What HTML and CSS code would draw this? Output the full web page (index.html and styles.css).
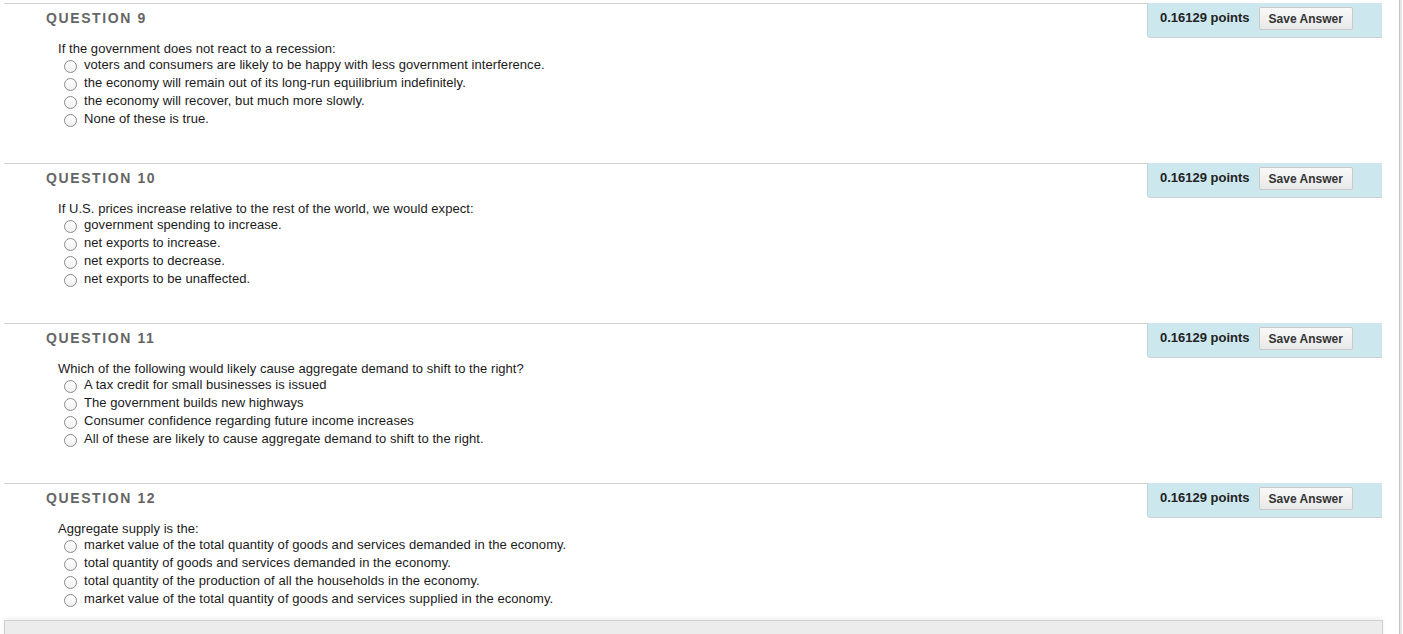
FILE: index.html
```html
<!DOCTYPE html>
<html lang="en">
<head>
<meta charset="utf-8">
<title>Questions</title>
<link rel="stylesheet" href="styles.css">
</head>
<body>
<div class="page">
  <main class="content">
    <section class="question">
      <div class="q-head">
        <h3 class="q-title">QUESTION 9</h3>
        <div class="q-points"><span class="pts">0.16129 points</span><button class="save">Save Answer</button></div>
      </div>
      <p class="q-text">If the government does not react to a recession:</p>
      <ul class="options">
        <li><span class="radio"></span>voters and consumers are likely to be happy with less government interference.</li>
        <li><span class="radio"></span>the economy will remain out of its long-run equilibrium indefinitely.</li>
        <li><span class="radio"></span>the economy will recover, but much more slowly.</li>
        <li><span class="radio"></span>None of these is true.</li>
      </ul>
    </section>
    <section class="question">
      <div class="q-head">
        <h3 class="q-title">QUESTION 10</h3>
        <div class="q-points"><span class="pts">0.16129 points</span><button class="save">Save Answer</button></div>
      </div>
      <p class="q-text">If U.S. prices increase relative to the rest of the world, we would expect:</p>
      <ul class="options">
        <li><span class="radio"></span>government spending to increase.</li>
        <li><span class="radio"></span>net exports to increase.</li>
        <li><span class="radio"></span>net exports to decrease.</li>
        <li><span class="radio"></span>net exports to be unaffected.</li>
      </ul>
    </section>
    <section class="question">
      <div class="q-head">
        <h3 class="q-title">QUESTION 11</h3>
        <div class="q-points"><span class="pts">0.16129 points</span><button class="save">Save Answer</button></div>
      </div>
      <p class="q-text">Which of the following would likely cause aggregate demand to shift to the right?</p>
      <ul class="options">
        <li><span class="radio"></span>A tax credit for small businesses is issued</li>
        <li><span class="radio"></span>The government builds new highways</li>
        <li><span class="radio"></span>Consumer confidence regarding future income increases</li>
        <li><span class="radio"></span>All of these are likely to cause aggregate demand to shift to the right.</li>
      </ul>
    </section>
    <section class="question last">
      <div class="q-head">
        <h3 class="q-title">QUESTION 12</h3>
        <div class="q-points"><span class="pts">0.16129 points</span><button class="save">Save Answer</button></div>
      </div>
      <p class="q-text">Aggregate supply is the:</p>
      <ul class="options">
        <li><span class="radio"></span>market value of the total quantity of goods and services demanded in the economy.</li>
        <li><span class="radio"></span>total quantity of goods and services demanded in the economy.</li>
        <li><span class="radio"></span>total quantity of the production of all the households in the economy.</li>
        <li><span class="radio"></span>market value of the total quantity of goods and services supplied in the economy.</li>
      </ul>
    </section>
    <div class="footer-box"></div>
  </main>
  <div class="edge"></div>
</div>
</body>
</html>
```
FILE: styles.css
```css
html, body {
  margin: 0;
  padding: 0;
  background: #fff;
}
body {
  font-family: "Liberation Sans", Arial, Helvetica, sans-serif;
  color: #1a1a1a;
  overflow: hidden;
}
.page {
  display: flex;
  min-height: 100vh;
}
.content {
  width: 1379px;
  padding: 3px 0 0 4px;
}
.question {
  width: 1378px;
  border-top: 1px solid #cfcfcf;
  padding-bottom: 35px;
}
.question.last {
  padding-bottom: 12px;
}
.q-head {
  display: flex;
  justify-content: space-between;
  align-items: flex-start;
}
.q-title {
  margin: 6px 0 0 42px;
  font-size: 14px;
  line-height: 17px;
  font-weight: bold;
  letter-spacing: 1.6px;
  color: #666;
}
.q-points {
  width: 222px;
  height: 31px;
  padding: 3px 0 0 12px;
  box-sizing: content-box;
  display: flex;
  align-items: flex-start;
  gap: 9px;
  background: #cce8ee;
  border-left: 1px solid #c6d2d5;
  border-bottom: 1px solid #c6d2d5;
  border-bottom-left-radius: 4px;
  margin-top: -1px;
}
.pts {
  font-size: 13px;
  font-weight: bold;
  line-height: 15px;
  margin-top: 4px;
  color: #222;
}
.save {
  height: 23px;
  padding: 0 9px;
  margin-top: 1px;
  font-family: "Liberation Sans", Arial, Helvetica, sans-serif;
  font-size: 12px;
  font-weight: bold;
  color: #333;
  background: linear-gradient(#f9f9f9, #e8e8e8);
  border: 1px solid #cacaca;
  border-radius: 2px;
}
.q-text {
  margin: 3px 0 0 54px;
  font-size: 13px;
  line-height: 16px;
  letter-spacing: 0.05px;
}
.options {
  list-style: none;
  margin: -1px 0 0 60px;
  padding: 0;
}
.options li {
  display: flex;
  align-items: flex-start;
  font-size: 13px;
  line-height: 18px;
  letter-spacing: 0.06px;
}
.radio {
  width: 11px;
  height: 11px;
  margin: 4px 7px 0 0;
  border: 1px solid #8a8a8a;
  border-radius: 50%;
  background: linear-gradient(#fff, #f1f1f1);
  flex: none;
}
.footer-box {
  height: 40px;
  background: #ececec;
  border: 1px solid #cfcfcf;
  box-shadow: 0 -2px 4px rgba(0, 0, 0, 0.06);
}
.edge {
  margin-left: 16px;
  width: 2px;
  border-left: 1px solid #c4c4c4;
  background: #e6e6e6;
}
```
